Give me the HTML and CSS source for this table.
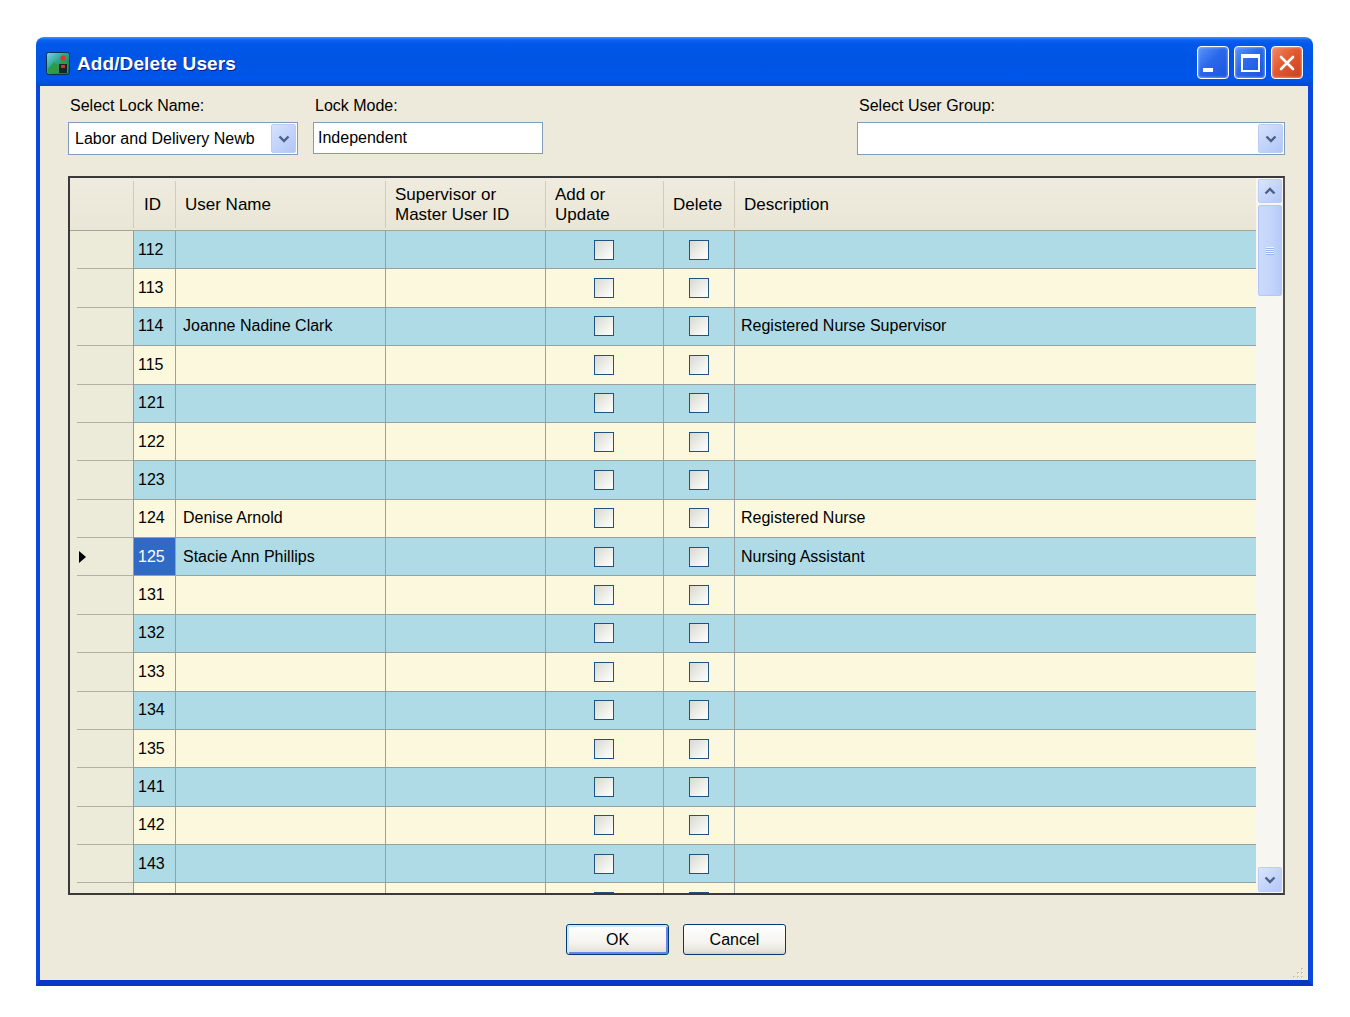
FILE: index.html
```html
<!DOCTYPE html>
<html>
<head>
<meta charset="utf-8">
<title>Add/Delete Users</title>
<link rel="stylesheet" href="styles.css">
</head>
<body>
<div class="window">
  <div class="titlebar">
    <svg class="app-icon" width="24" height="23" viewBox="0 0 24 23">
      <defs>
        <linearGradient id="ig" x1="0" y1="0" x2="1" y2="1">
          <stop offset="0" stop-color="#7fd0f0"/>
          <stop offset="0.45" stop-color="#2aa58a"/>
          <stop offset="1" stop-color="#156a3a"/>
        </linearGradient>
      </defs>
      <rect x="0.5" y="0.5" width="23" height="22" rx="2" fill="url(#ig)" stroke="#0b3350"/>
      <path d="M2 17 L8 10 L12 13 L17 7 L22 12 V21 H2 Z" fill="#2f9a4a"/>
      <circle cx="17" cy="6" r="2.6" fill="#d23a2a"/>
      <path d="M13 21 V12 H21 V21 Z" fill="#17242e"/>
      <rect x="15" y="13" width="4" height="3" fill="#c83a2a"/>
    </svg>
    <span class="title">Add/Delete Users</span>
    <div class="tb-buttons">
      <div class="tb-btn tb-blue"><span class="min-bar"></span></div>
      <div class="tb-btn tb-blue"><span class="max-box"></span></div>
      <div class="tb-btn tb-close">
        <svg width="20" height="20" viewBox="0 0 20 20"><path d="M4 4 L16 16 M16 4 L4 16" stroke="#fff" stroke-width="2.6" stroke-linecap="round"/></svg>
      </div>
    </div>
  </div>

  <div class="client">
    <div class="form-row">
      <div class="field f-lock">
        <div class="label">Select Lock Name:</div>
        <div class="combo">
          <span class="combo-val">Labor and Delivery Newb</span>
          <span class="dd-btn"><svg width="12" height="8" viewBox="0 0 12 8"><path d="M1.5 1.5 L6 6 L10.5 1.5" fill="none" stroke="#4d6185" stroke-width="2.4"/></svg></span>
        </div>
      </div>
      <div class="field f-mode">
        <div class="label">Lock Mode:</div>
        <div class="textbox">Independent</div>
      </div>
      <div class="field f-group">
        <div class="label">Select User Group:</div>
        <div class="combo">
          <span class="combo-val"></span>
          <span class="dd-btn"><svg width="12" height="8" viewBox="0 0 12 8"><path d="M1.5 1.5 L6 6 L10.5 1.5" fill="none" stroke="#4d6185" stroke-width="2.4"/></svg></span>
        </div>
      </div>
    </div>

    <div class="grid">
      <div class="table">
        <div class="hrow">
          <div class="hc c-rh"></div>
          <div class="hc c-id">ID</div>
          <div class="hc c-user">User Name</div>
          <div class="hc c-sup">Supervisor or<br>Master User ID</div>
          <div class="hc c-add">Add or<br>Update</div>
          <div class="hc c-del">Delete</div>
          <div class="hc c-desc">Description</div>
        </div>
        <div class="rows">
          <div class="row blue"><div class="rh"></div><div class="cell c-id">112</div><div class="cell c-user"></div><div class="cell c-sup"></div><div class="cell c-add"><span class="chk"></span></div><div class="cell c-del"><span class="chk"></span></div><div class="cell c-desc"></div></div>
          <div class="row cream"><div class="rh"></div><div class="cell c-id">113</div><div class="cell c-user"></div><div class="cell c-sup"></div><div class="cell c-add"><span class="chk"></span></div><div class="cell c-del"><span class="chk"></span></div><div class="cell c-desc"></div></div>
          <div class="row blue"><div class="rh"></div><div class="cell c-id">114</div><div class="cell c-user">Joanne Nadine Clark</div><div class="cell c-sup"></div><div class="cell c-add"><span class="chk"></span></div><div class="cell c-del"><span class="chk"></span></div><div class="cell c-desc">Registered Nurse Supervisor</div></div>
          <div class="row cream"><div class="rh"></div><div class="cell c-id">115</div><div class="cell c-user"></div><div class="cell c-sup"></div><div class="cell c-add"><span class="chk"></span></div><div class="cell c-del"><span class="chk"></span></div><div class="cell c-desc"></div></div>
          <div class="row blue"><div class="rh"></div><div class="cell c-id">121</div><div class="cell c-user"></div><div class="cell c-sup"></div><div class="cell c-add"><span class="chk"></span></div><div class="cell c-del"><span class="chk"></span></div><div class="cell c-desc"></div></div>
          <div class="row cream"><div class="rh"></div><div class="cell c-id">122</div><div class="cell c-user"></div><div class="cell c-sup"></div><div class="cell c-add"><span class="chk"></span></div><div class="cell c-del"><span class="chk"></span></div><div class="cell c-desc"></div></div>
          <div class="row blue"><div class="rh"></div><div class="cell c-id">123</div><div class="cell c-user"></div><div class="cell c-sup"></div><div class="cell c-add"><span class="chk"></span></div><div class="cell c-del"><span class="chk"></span></div><div class="cell c-desc"></div></div>
          <div class="row cream"><div class="rh"></div><div class="cell c-id">124</div><div class="cell c-user">Denise Arnold</div><div class="cell c-sup"></div><div class="cell c-add"><span class="chk"></span></div><div class="cell c-del"><span class="chk"></span></div><div class="cell c-desc">Registered Nurse</div></div>
          <div class="row blue"><div class="rh"><span class="cur-arrow"></span></div><div class="cell c-id sel">125</div><div class="cell c-user">Stacie Ann Phillips</div><div class="cell c-sup"></div><div class="cell c-add"><span class="chk"></span></div><div class="cell c-del"><span class="chk"></span></div><div class="cell c-desc">Nursing Assistant</div></div>
          <div class="row cream"><div class="rh"></div><div class="cell c-id">131</div><div class="cell c-user"></div><div class="cell c-sup"></div><div class="cell c-add"><span class="chk"></span></div><div class="cell c-del"><span class="chk"></span></div><div class="cell c-desc"></div></div>
          <div class="row blue"><div class="rh"></div><div class="cell c-id">132</div><div class="cell c-user"></div><div class="cell c-sup"></div><div class="cell c-add"><span class="chk"></span></div><div class="cell c-del"><span class="chk"></span></div><div class="cell c-desc"></div></div>
          <div class="row cream"><div class="rh"></div><div class="cell c-id">133</div><div class="cell c-user"></div><div class="cell c-sup"></div><div class="cell c-add"><span class="chk"></span></div><div class="cell c-del"><span class="chk"></span></div><div class="cell c-desc"></div></div>
          <div class="row blue"><div class="rh"></div><div class="cell c-id">134</div><div class="cell c-user"></div><div class="cell c-sup"></div><div class="cell c-add"><span class="chk"></span></div><div class="cell c-del"><span class="chk"></span></div><div class="cell c-desc"></div></div>
          <div class="row cream"><div class="rh"></div><div class="cell c-id">135</div><div class="cell c-user"></div><div class="cell c-sup"></div><div class="cell c-add"><span class="chk"></span></div><div class="cell c-del"><span class="chk"></span></div><div class="cell c-desc"></div></div>
          <div class="row blue"><div class="rh"></div><div class="cell c-id">141</div><div class="cell c-user"></div><div class="cell c-sup"></div><div class="cell c-add"><span class="chk"></span></div><div class="cell c-del"><span class="chk"></span></div><div class="cell c-desc"></div></div>
          <div class="row cream"><div class="rh"></div><div class="cell c-id">142</div><div class="cell c-user"></div><div class="cell c-sup"></div><div class="cell c-add"><span class="chk"></span></div><div class="cell c-del"><span class="chk"></span></div><div class="cell c-desc"></div></div>
          <div class="row blue"><div class="rh"></div><div class="cell c-id">143</div><div class="cell c-user"></div><div class="cell c-sup"></div><div class="cell c-add"><span class="chk"></span></div><div class="cell c-del"><span class="chk"></span></div><div class="cell c-desc"></div></div>
          <div class="row cream"><div class="rh"></div><div class="cell c-id"></div><div class="cell c-user"></div><div class="cell c-sup"></div><div class="cell c-add"><span class="chk"></span></div><div class="cell c-del"><span class="chk"></span></div><div class="cell c-desc"></div></div>
        </div>
      </div>
      <div class="vscroll">
        <div class="sb-btn"><svg width="12" height="8" viewBox="0 0 12 8"><path d="M1.5 6.5 L6 2 L10.5 6.5" fill="none" stroke="#4d6185" stroke-width="2.4"/></svg></div>
        <div class="sb-thumb"><span class="grip-lines"></span></div>
        <div class="sb-track"></div>
        <div class="sb-btn"><svg width="12" height="8" viewBox="0 0 12 8"><path d="M1.5 1.5 L6 6 L10.5 1.5" fill="none" stroke="#4d6185" stroke-width="2.4"/></svg></div>
      </div>
    </div>

    <div class="buttons">
      <div class="btn btn-default">OK</div>
      <div class="btn">Cancel</div>
    </div>

    <svg class="size-grip" width="16" height="16" viewBox="0 0 16 16">
      <g fill="#c9c5b3">
        <rect x="12" y="4" width="2" height="2"/>
        <rect x="8" y="8" width="2" height="2"/><rect x="12" y="8" width="2" height="2"/>
        <rect x="4" y="12" width="2" height="2"/><rect x="8" y="12" width="2" height="2"/><rect x="12" y="12" width="2" height="2"/>
      </g>
      <g fill="#ffffff">
        <rect x="13" y="5" width="1" height="1"/>
        <rect x="9" y="9" width="1" height="1"/><rect x="13" y="9" width="1" height="1"/>
        <rect x="5" y="13" width="1" height="1"/><rect x="9" y="13" width="1" height="1"/><rect x="13" y="13" width="1" height="1"/>
      </g>
    </svg>
  </div>
</div>
</body>
</html>
```

FILE: styles.css
```css
* { box-sizing: border-box; }

body {
  margin: 0;
  background: #ffffff;
  font-family: "Liberation Sans", Arial, sans-serif;
  font-size: 16px;
  color: #000;
}

.window {
  margin: 37px 0 0 36px;
  width: 1277px;
}

/* ---------- title bar ---------- */
.titlebar {
  height: 49px;
  display: flex;
  align-items: center;
  padding: 0 10px 0 10px;
  border-radius: 8px 8px 0 0;
  background: linear-gradient(#3d95ff 0px, #0a63f0 3px, #0058ea 7px, #0054e3 45%, #0056ea 85%, #0049d6 100%);
}

.app-icon { flex: none; margin-top: 3px; }

.title {
  margin-left: 7px;
  margin-top: 5px;
  color: #ffffff;
  font-weight: bold;
  font-size: 19px;
  letter-spacing: 0.1px;
  text-shadow: 1px 1px 0 #0a1c8a;
}

.tb-buttons {
  margin-left: auto;
  display: flex;
  gap: 5px;
  margin-top: 2px;
}

.tb-btn {
  width: 32px;
  height: 33px;
  border: 1px solid #ffffff;
  border-radius: 4px;
  display: flex;
  align-items: center;
  justify-content: center;
  position: relative;
}

.tb-blue {
  background: linear-gradient(135deg, #5d96f8 0%, #2a68ec 45%, #1a55dc 100%);
  box-shadow: inset 0 0 2px 1px rgba(150, 190, 255, 0.6);
}

.tb-close {
  background: linear-gradient(135deg, #f08a68 0%, #e35a30 45%, #c8401c 100%);
  box-shadow: inset 0 0 2px 1px rgba(255, 180, 150, 0.6);
}

.min-bar {
  width: 10px;
  height: 4px;
  background: #ffffff;
  margin: 14px 10px 0 0;
}

.max-box {
  width: 19px;
  height: 18px;
  border: 2px solid #ffffff;
  border-top-width: 4px;
}

/* ---------- client ---------- */
.client {
  position: relative;
  height: 900px;
  background: #edeadb;
  border-left: 4px solid #0b47dc;
  border-right: 5px solid #0b47dc;
  border-bottom: 6px solid #0a36c4;
  padding: 11px 23px 0 28px;
}

.form-row {
  display: flex;
  align-items: flex-start;
}

.field { display: flex; flex-direction: column; }
.f-lock { width: 230px; }
.f-mode { width: 230px; margin-left: 15px; }
.f-group { width: 428px; margin-left: auto; }

.label {
  height: 18px;
  line-height: 18px;
  padding-left: 2px;
  margin-bottom: 7px;
  white-space: nowrap;
}

.combo, .textbox {
  height: 33px;
  background: #ffffff;
  border: 1px solid #7f9db9;
  display: flex;
  align-items: center;
}

.textbox { padding-left: 4px; height: 32px; }

.combo-val {
  flex: 1;
  padding-left: 6px;
  white-space: nowrap;
  overflow: hidden;
}

.dd-btn {
  width: 25px;
  height: 29px;
  margin-right: 1px;
  border: 1px solid #bccdf4;
  border-radius: 2px;
  background: linear-gradient(135deg, #d6e2fd 0%, #c3d4fb 50%, #b1c6f6 100%);
  display: flex;
  align-items: center;
  justify-content: center;
}

/* ---------- grid ---------- */
.grid {
  margin-top: 21px;
  height: 719px;
  border: 2px solid #3a3a3a;
  border-right-color: #505050;
  display: flex;
  background: #f7f6f1;
}

.table {
  width: 1186px;
  display: flex;
  flex-direction: column;
  overflow: hidden;
}

.hrow {
  flex: none;
  height: 53px;
  display: flex;
  background: linear-gradient(#efecdf, #e9e6d6);
  border-bottom: 1px solid #a4a397;
}

.hc {
  display: flex;
  align-items: center;
  font-size: 17px;
  line-height: 20px;
  padding-left: 9px;
  border-right: 1px solid #cfccbd;
  margin: 3px 0 2px 0;
}

.c-rh  { width: 64px; flex: none; padding-left: 0; }
.c-id  { width: 42px; flex: none; }
.c-user{ width: 210px; flex: none; }
.c-sup { width: 160px; flex: none; }
.c-add { width: 118px; flex: none; }
.c-del { width: 71px; flex: none; }
.c-desc{ flex: 1; border-right: none; }

.hc.c-id { padding-left: 10px; }
.hc.c-user { padding-left: 9px; }

.rows {
  flex: 1;
  overflow: hidden;
}

.row {
  height: 38.375px;
  display: flex;
}

.row.blue  { background: #aedbe6; }
.row.cream { background: #fbf8de; }

.rh {
  width: 64px;
  flex: none;
  background: linear-gradient(#b3b1a6, #b3b1a6) no-repeat 7px 100% / 57px 1px, #ecead9;
  border-right: 1px solid #9a9a9a;
  display: flex;
  align-items: center;
  padding-left: 9px;
}

.cur-arrow {
  width: 0;
  height: 0;
  border-top: 6px solid transparent;
  border-bottom: 6px solid transparent;
  border-left: 7px solid #000000;
}

.cell {
  display: flex;
  align-items: center;
  border-right: 1px solid #9aa1a3;
  border-bottom: 1px solid #9aa1a3;
  white-space: nowrap;
  overflow: hidden;
}

.cell.c-id { padding-left: 4px; }
.cell.c-user { padding-left: 7px; }
.cell.c-desc { padding-left: 6px; border-right: none; }
.cell.c-add, .cell.c-del { justify-content: center; }
.cell.c-add { padding-right: 1px; }
.cell.c-del { padding-right: 1px; }

.cell.sel {
  background: #316ac5;
  color: #ffffff;
}

.chk {
  width: 20px;
  height: 20px;
  border: 1px solid #1f5482;
  background: linear-gradient(135deg, #d9d9d2 0%, #efefea 55%, #ffffff 100%);
}

/* ---------- scrollbar ---------- */
.vscroll {
  flex: 1;
  display: flex;
  flex-direction: column;
  padding: 1px 1px 1px 2px;
  background: #f7f6f1;
}

.sb-btn {
  flex: none;
  height: 24px;
  border: 1px solid #bccdf4;
  border-radius: 2px;
  background: linear-gradient(135deg, #dae5fe 0%, #c6d6fb 50%, #b4c8f6 100%);
  display: flex;
  align-items: center;
  justify-content: center;
}

.sb-btn:last-child { height: 25px; }

.sb-thumb {
  flex: none;
  height: 91px;
  margin-top: 2px;
  border: 1px solid #b5c8f3;
  border-radius: 2px;
  background: linear-gradient(90deg, #cbdafd 0%, #c3d4fb 60%, #b6caf7 100%);
  display: flex;
  align-items: center;
  justify-content: center;
}

.grip-lines {
  width: 8px;
  height: 8px;
  background: repeating-linear-gradient(#eef3fe 0px, #eef3fe 1px, #98b3ee 1px, #98b3ee 2px);
}

.sb-track { flex: 1; }

/* ---------- buttons ---------- */
.buttons {
  margin-top: 29px;
  display: flex;
  justify-content: center;
  gap: 14px;
  padding-right: 1px;
}

.btn {
  width: 103px;
  height: 31px;
  border: 1px solid #003c74;
  border-radius: 3px;
  background: linear-gradient(#ffffff 0%, #f5f4f0 60%, #e6e3da 90%, #d6d0c5 100%);
  display: flex;
  align-items: center;
  justify-content: center;
  font-size: 16px;
}

.btn-default {
  box-shadow: inset 1px 1px 0 1px #cee7ff, inset -1px -1px 0 1px #6982ee;
}

.size-grip {
  position: absolute;
  right: 3px;
  bottom: 0px;
}
```
